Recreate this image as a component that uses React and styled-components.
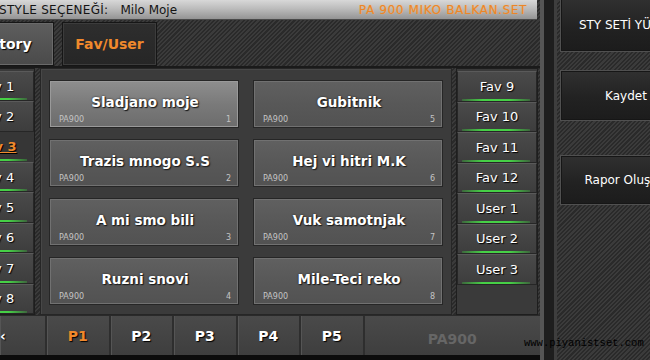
import styled, { createGlobalStyle } from "styled-components";

const GlobalStyle = createGlobalStyle`
    html, body {
        margin: 0;
        padding: 0;
        background: #000;
    }
    * {
        box-sizing: border-box;
    }
`;

const leftFavs = ["Fav 1", "Fav 2", "Fav 3", "Fav 4", "Fav 5", "Fav 6", "Fav 7", "Fav 8"];
const rightFavs = ["Fav 9", "Fav 10", "Fav 11", "Fav 12", "User 1", "User 2", "User 3"];
// grid fills column by column: 1-4 left, 5-8 right
const styles = [
    { name: "Sladjano moje", n: 1 },
    { name: "Gubitnik", n: 5 },
    { name: "Trazis mnogo S.S", n: 2 },
    { name: "Hej vi hitri M.K", n: 6 },
    { name: "A mi smo bili", n: 3 },
    { name: "Vuk samotnjak", n: 7 },
    { name: "Ruzni snovi", n: 4 },
    { name: "Mile-Teci reko", n: 8 },
];
const pages = ["P1", "P2", "P3", "P4", "P5"];

function App() {
    return (
        <>
            <GlobalStyle />
            <Screen>
                <Main>
                    <TitleBar>
                        <Label>STYLE SEÇENEĞİ:</Label>
                        <Value>Milo Moje</Value>
                        <SetName>PA 900 MIKO BALKAN.SET</SetName>
                    </TitleBar>
                    <TabRow>
                        <Tab>History</Tab>
                        <Tab active>Fav/User</Tab>
                    </TabRow>
                    <Body>
                        <FavList left>
                            {leftFavs.map((f, i) => (
                                <FavItem key={f} selected={i === 2} glow={i !== 1}>{f}</FavItem>
                            ))}
                        </FavList>
                        <Grid>
                            {styles.map((s) => (
                                <StyleButton key={s.n} selected={s.n === 1}>
                                    <StyleName>{s.name}</StyleName>
                                    <StyleFoot>
                                        <span>PA900</span>
                                        <span>{s.n}</span>
                                    </StyleFoot>
                                </StyleButton>
                            ))}
                        </Grid>
                        <FavList>
                            {rightFavs.map((f) => (
                                <FavItem key={f} glow>{f}</FavItem>
                            ))}
                        </FavList>
                    </Body>
                    <PageBar>
                        <PageCell wide>‹</PageCell>
                        {pages.map((p, i) => (
                            <PageCell key={p} active={i === 0}>{p}</PageCell>
                        ))}
                        <PageRest>PA900</PageRest>
                    </PageBar>
                </Main>
                <Divider />
                <Side>
                    <SideButton top={-2} height={54}>STY SETİ YÜKLE</SideButton>
                    <SideButton top={18} height={51}>Kaydet</SideButton>
                    <SideButton top={34} height={50}>Rapor Oluştur</SideButton>
                </Side>
                <Watermark>www.piyanistset.com</Watermark>
            </Screen>
        </>
    );
}

const carbon = `
    background-color: #323232;
    background-image: repeating-linear-gradient(135deg, #2a2a2a 0px, #2a2a2a 1.5px, #3b3b3b 1.5px, #3b3b3b 3px);
`;

const Screen = styled.div`
    position: relative;
    display: flex;
    width: 650px;
    height: 360px;
    overflow: hidden;
    font-family: 'DejaVu Sans', 'Liberation Sans', sans-serif;
    ${carbon}
`;

const Main = styled.div`
    display: flex;
    flex-direction: column;
    width: 540px;
    flex-shrink: 0;
    border-bottom: 5px solid #0c0c0c;
`;

const TitleBar = styled.div`
    display: flex;
    align-items: center;
    width: 537px;
    height: 20px;
    padding: 0 10px 0 0;
    background: linear-gradient(#d8d8d8, #bcbcbc 45%, #949494);
    border-bottom: 1px solid #4a4a4a;
    font-size: 12px;
    color: #141414;
`;

const Label = styled.span`
    margin-left: -1px;
    letter-spacing: 0.3px;
`;

const Value = styled.span`
    margin-left: 12px;
`;

const SetName = styled.span`
    margin-left: auto;
    font-size: 12px;
    letter-spacing: 0.65px;
    color: #e8862a;
    text-shadow: 0 0 1px #ffb060;
`;

const TabRow = styled.div`
    display: flex;
    gap: 8px;
    height: 48px;
    padding-top: 2px;
    border-bottom: 2px solid #1a1a1a;
`;

const Tab = styled.div`
    display: flex;
    align-items: center;
    justify-content: center;
    height: 44px;
    font-size: 14px;
    font-weight: 700;
    border: 1px solid #161616;
    box-shadow: inset 0 0 0 1px ${props => props.active ? "#3c3c3c" : "#6a6a6a"};
    ${props => props.active ? `
        width: 95px;
        color: #f0892c;
        background: linear-gradient(#2e2e2e, #262626);
    ` : `
        width: 102px;
        margin-left: -48px;
        color: #ffffff;
        background: linear-gradient(#5e5e5e, #4a4a4a);
        text-shadow: 1px 1px 1px #000;
    `}
`;

const Body = styled.div`
    display: flex;
    gap: 4px;
    height: 247px;
`;

const FavList = styled.div`
    display: flex;
    flex-direction: column;
    width: ${props => props.left ? "76px" : "82px"};
    flex-shrink: 0;
    margin-left: ${props => props.left ? "-41px" : "0"};
    padding-top: 2px;
    background: #3a3a3a;
    border: 1px solid #1e1e1e;
`;

const FavItem = styled.div`
    position: relative;
    display: flex;
    align-items: center;
    justify-content: center;
    height: ${props => props.selected ? "30px" : "30.5px"};
    font-size: 13px;
    color: ${props => props.selected ? "#f0892c" : "#ffffff"};
    font-weight: ${props => props.selected ? 700 : 400};
    text-decoration: ${props => props.selected ? "underline" : "none"};
    text-shadow: 1px 1px 1px #000;
    background: ${props => props.selected ? "#363636" : "linear-gradient(#4a4a4a, #3d3d3d)"};
    border: 1px solid ${props => props.selected ? "transparent" : "#262626"};
    border-top-color: ${props => props.selected ? "transparent" : "#5a5a5a"};
    &::after {
        content: "";
        position: absolute;
        left: 4px;
        right: 6px;
        bottom: 0;
        height: 2px;
        background: linear-gradient(90deg, rgba(60, 200, 60, 0.3), #46d046 30%, #46d046 70%, rgba(60, 200, 60, 0.3));
        display: ${props => props.glow ? "block" : "none"};
    }
`;

const Grid = styled.div`
    display: grid;
    grid-template-columns: 190px 190px;
    grid-auto-rows: 48px;
    column-gap: 14px;
    row-gap: 11px;
    width: 412px;
    flex-shrink: 0;
    padding: 11px 8px 0 8px;
    margin-left: 1px;
    background: #3b3b3b;
    border: 1px solid #262626;
    box-shadow: inset 1px 1px 0 #474747;
`;

const StyleButton = styled.div`
    display: flex;
    flex-direction: column;
    padding: 4px 7px 2px 9px;
    border: 1px solid #262626;
    box-shadow: inset 0 0 0 1px ${props => props.selected ? "#9a9a9a" : "#717171"};
    background: ${props => props.selected
        ? "linear-gradient(#8e8e8e, #7a7a7a 50%, #6c6c6c)"
        : "linear-gradient(#606060, #585858 50%, #525252)"};
`;

const StyleName = styled.div`
    flex: 1;
    display: flex;
    align-items: center;
    justify-content: center;
    padding-top: 4px;
    font-size: 13.5px;
    font-weight: 700;
    color: #ffffff;
    text-shadow: 1px 1px 1px #1a1a1a, 0 0 2px #222;
`;

const StyleFoot = styled.div`
    display: flex;
    justify-content: space-between;
    font-size: 8px;
    line-height: 10px;
    color: #c4c4c4;
`;

const PageBar = styled.div`
    display: flex;
    height: 40px;
    background: linear-gradient(#4a4a4a, #3e3e3e);
    border-top: 1px solid #2a2a2a;
`;

const PageCell = styled.div`
    display: flex;
    align-items: center;
    justify-content: ${props => props.wide ? "flex-start" : "center"};
    width: ${props => props.wide ? "47px" : "63.5px"};
    font-size: 14px;
    font-weight: 700;
    color: ${props => props.active ? "#f0892c" : "#ffffff"};
    text-shadow: 1px 1px 1px #000;
    border-right: 2px solid #2e2e2e;
    box-shadow: inset 1px 0 0 #555;
`;

const PageRest = styled.div`
    flex: 1;
    display: flex;
    align-items: center;
    justify-content: center;
    padding-top: 6px;
    font-size: 14px;
    font-weight: 700;
    color: #666666;
`;

const Divider = styled.div`
    width: 17px;
    flex-shrink: 0;
    background: #1e1e1e;
    border-left: 4px solid #555555;
    border-right: 3px solid #3e3e3e;
`;

const Side = styled.div`
    display: flex;
    flex-direction: column;
    flex: 1;
    padding-left: 3px;
`;

const SideButton = styled.div`
    display: flex;
    align-items: center;
    justify-content: center;
    width: 132px;
    height: ${props => props.height}px;
    margin-top: ${props => props.top}px;
    flex-shrink: 0;
    font-size: 12px;
    color: #ffffff;
    white-space: nowrap;
    background: linear-gradient(#303030, #222222 55%, #1c1c1c);
    border: 1px solid #505050;
    box-shadow: inset 0 0 0 1px #161616;
`;

const Watermark = styled.div`
    position: absolute;
    left: 524px;
    top: 337px;
    font-family: 'Liberation Mono', 'DejaVu Sans Mono', monospace;
    font-size: 10.5px;
    color: #000000;
`;

export default App;
